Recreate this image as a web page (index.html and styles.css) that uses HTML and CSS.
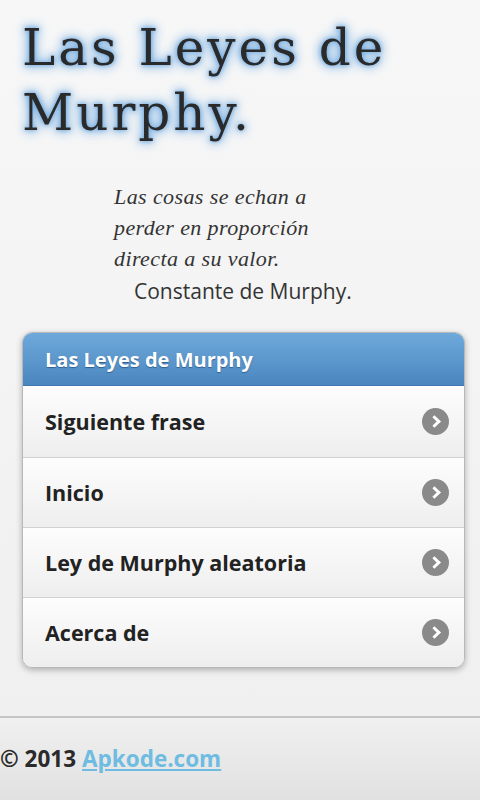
FILE: index.html
```html
<!DOCTYPE html>
<html lang="es">
<head>
  <meta charset="UTF-8" />
  <meta name="viewport" content="width=device-width, initial-scale=1.0"/>
  <title>Las Leyes de Murphy</title>
  <link rel="stylesheet" href="styles.css">
</head>
<body>

  <div class="page">
    <div class="content">
      <h1 class="title">Las Leyes de Murphy.</h1>

      <blockquote class="quote">
        <p>Las cosas se echan a perder en proporción directa a su valor.</p>
        <cite>Constante de Murphy.</cite>
      </blockquote>

      <ul class="listview">
        <li class="list-header">Las Leyes de Murphy</li>
        <li><a href="#">Siguiente frase <span class="arrow"></span></a></li>
        <li><a href="#">Inicio <span class="arrow"></span></a></li>
        <li><a href="#">Ley de Murphy aleatoria <span class="arrow"></span></a></li>
        <li><a href="#">Acerca de <span class="arrow"></span></a></li>
      </ul>
    </div>

    <div class="footer">
      © 2013 <a href="#">Apkode.com</a>
    </div>
  </div>

</body>
</html>
```

FILE: styles.css
```css
* {
  margin: 0;
  padding: 0;
  box-sizing: border-box;
}

body {
  font-family: 'Open Sans', 'Liberation Sans', Arial, sans-serif;
  background: #f2f2f2;
  color: #333;
}

.page {
  min-height: 800px;
  display: flex;
  flex-direction: column;
  background: linear-gradient(#f7f7f7, #efefef);
}

.content {
  flex: 1;
  padding: 16px 15px 0 22px;
}

.title {
  font-family: 'DejaVu Serif', serif;
  font-weight: normal;
  font-size: 50px;
  line-height: 65px;
  letter-spacing: 3px;
  color: #2a2a2a;
  text-shadow: 0 0 4px #6aa5de, 0 0 10px #6aa5de, 0 0 14px #8cbde8;
}

.quote {
  margin: 35px 0 0 92px;
  width: 240px;
}

.quote p {
  font-family: 'Liberation Serif', serif;
  font-style: italic;
  font-size: 22px;
  line-height: 31px;
  letter-spacing: 0.4px;
  color: #333;
}

.quote cite {
  display: block;
  font-style: normal;
  font-size: 21px;
  line-height: 34px;
  margin-left: 20px;
  white-space: nowrap;
  color: #333;
}

/* inset list with blue header */
.listview {
  list-style: none;
  margin-top: 24px;
  width: 443px;
  border: 1px solid #b8b8b8;
  border-radius: 10px;
  overflow: hidden;
  box-shadow: 0 2px 6px rgba(0, 0, 0, 0.28);
}

.list-header {
  height: 53px;
  padding: 0 22px;
  display: flex;
  align-items: center;
  font-size: 20px;
  font-weight: bold;
  color: #fff;
  text-shadow: 0 1px 1px #2f5f8d;
  background: linear-gradient(#6fa9db, #4a86bf);
  border-bottom: 1px solid #3f78ad;
}

.listview li a {
  display: flex;
  align-items: center;
  justify-content: space-between;
  height: 70px;
  padding: 0 15px 0 22px;
  font-size: 21.5px;
  font-weight: bold;
  color: #222;
  text-decoration: none;
  background: linear-gradient(#fdfdfd, #eeeeee);
  border-top: 1px solid #d2d2d2;
}

.list-header + li a {
  border-top: none;
  height: 71px;
}

.arrow {
  width: 27px;
  height: 27px;
  border-radius: 50%;
  background: #8a8a8a;
  position: relative;
}

.arrow::after {
  content: "";
  position: absolute;
  left: 8px;
  top: 9px;
  width: 6px;
  height: 6px;
  border-top: 3px solid #fff;
  border-right: 3px solid #fff;
  transform: rotate(45deg);
}

.footer {
  height: 84px;
  border-top: 2px solid #c4c4c4;
  background: linear-gradient(#f0f0f0, #e1e1e1);
  display: flex;
  align-items: center;
  font-size: 22.5px;
  font-weight: bold;
  color: #2a2a2a;
  padding-bottom: 2px;
}

.footer a {
  margin-left: 6px;
  color: #6ebce2;
}
```
